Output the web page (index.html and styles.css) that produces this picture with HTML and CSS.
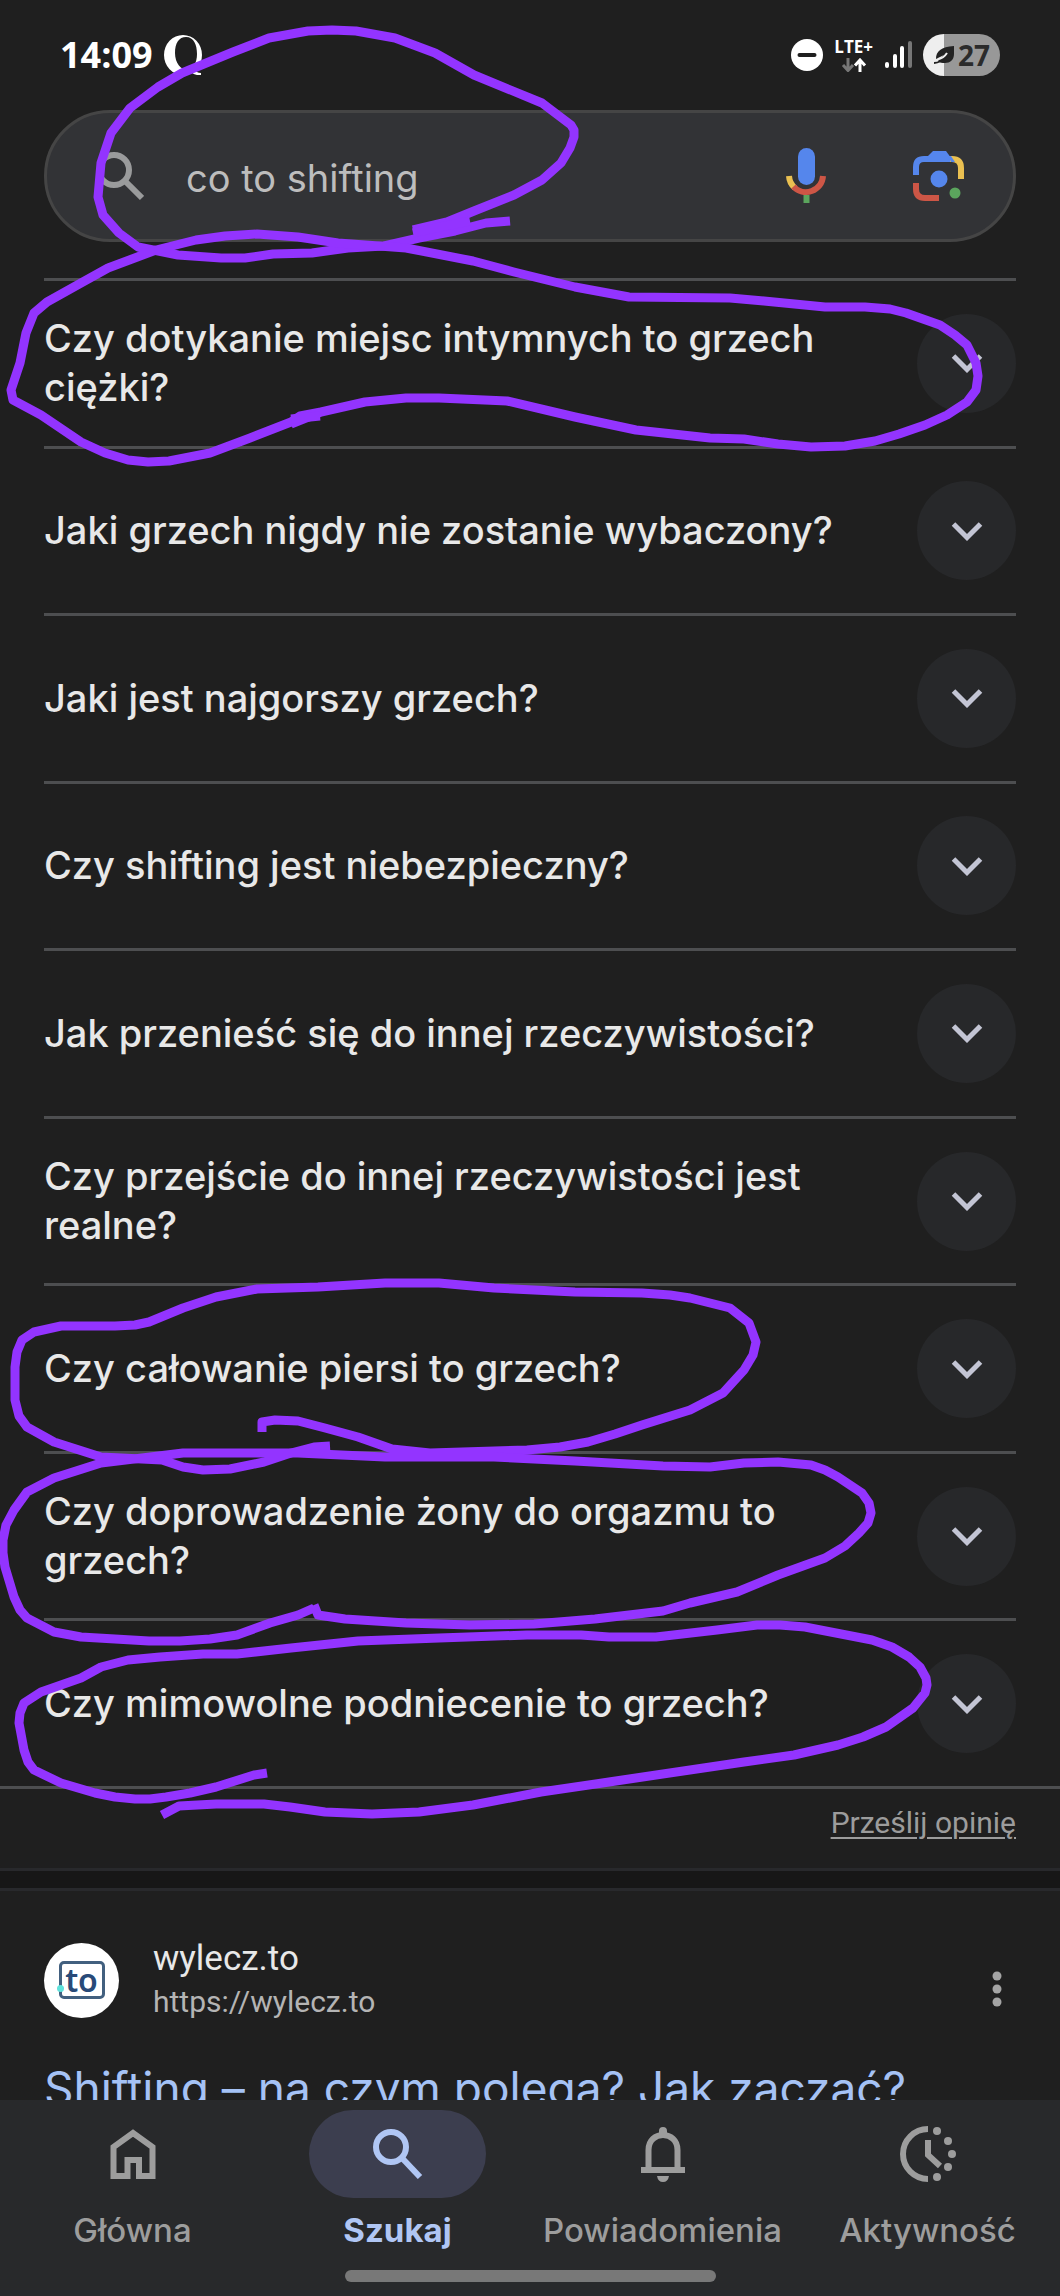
FILE: index.html
```html
<!DOCTYPE html>
<html lang="pl">
<head>
<meta charset="utf-8">
<meta name="viewport" content="width=device-width, initial-scale=1">
<title>co to shifting</title>
<link rel="stylesheet" href="styles.css">
</head>
<body>
<div class="screen">
  <svg class="symbols" aria-hidden="true">
    <symbol id="chevron" viewBox="0 0 32 20"><path d="M2.500 3 16 16.500 29.500 3" fill="none" stroke="currentColor" stroke-width="5"/></symbol>
  </svg>

  <header class="top">
    <div class="status">
      <div class="status-side">
        <span class="clock">14:09</span>
        <svg width="38" height="40" viewBox="0 0 38 40" fill="#fff" fill-rule="evenodd"><path d="M19 0a19 20 0 1 0 0 40 19 20 0 0 0 0-40ZM22 2c8 0 11 8 11 17s-4 16-10 16S11 28 11 18 15 2 22 2Z"/><path d="M23 31c5 0 8 7 14 7v2c-7 1-11-3-14-9Z"/></svg>
      </div>
      <div class="status-side">
        <svg width="32" height="32" viewBox="0 0 32 32"><circle cx="16" cy="16" r="16" fill="#fff"/><path d="M8.500 16h15" stroke="#1f1f1f" stroke-width="4" stroke-linecap="round"/></svg>
        <div class="network">
          <span>LTE+</span>
          <svg width="26" height="14" viewBox="0 0 26 14" fill="none" stroke-width="3"><path d="M7 0v12M2 7l5 5.500L12 7" stroke="#777"/><path d="M19 14V2M14 7.500 19 2l5 5.500" stroke="#fff"/></svg>
        </div>
        <svg width="28" height="30" viewBox="0 0 28 30" stroke-width="4" stroke-linecap="round"><path d="M3 24v2M11 16v10M18 8v18" stroke="#fff"/><path d="M26 3v23" stroke="#777"/></svg>
        <div class="battery">
          <svg width="22" height="20" viewBox="0 0 22 20"><path d="M21 1v8c0 6-4 9-9 9-3 0-5 0-7-2l6-6-8 4C3 6 8 2 21 1Z" fill="#222"/><path d="M1 18c4 0 9-3 13-8" fill="none" stroke="#222" stroke-width="2"/><path d="M5 14c4 0 7-3 9-6" fill="none" stroke="#eee" stroke-width="2"/></svg>
          <span>27</span>
        </div>
      </div>
    </div>
    <form class="search" role="search">
      <svg width="46" height="50" viewBox="0 0 46 50" fill="none" stroke="#9a9b9c" stroke-width="6"><circle cx="16" cy="19" r="15"/><path d="m27 30 17 17"/></svg>
      <input class="search-input" type="text" value="co to shifting" aria-label="Szukaj">
      <button class="search-button" type="button" aria-label="Wyszukiwanie głosowe">
        <svg width="40" height="56" viewBox="0 0 40 56" fill="none"><rect x="12" y="0" width="17" height="37" rx="8.500" fill="#5586ec"/><path d="M3 28a17 17 0 0 0 6 12" stroke="#eac051" stroke-width="6"/><path d="M7.500 38.500A17 17 0 0 0 37 28" stroke="#cd5646" stroke-width="6"/><path d="M20.500 47v8" stroke="#5ba55d" stroke-width="6"/></svg>
      </button>
      <button class="search-button" type="button" aria-label="Obiektyw">
        <svg width="52" height="52" viewBox="0 0 52 52" fill="none" stroke-width="6"><path d="M3 25V17q0-8 8-8h28" stroke="#5586ec"/><path d="M14 7 20 1h13l8 11H15Z" fill="#5586ec"/><path d="M37 9h2q9 0 9 9v11" stroke="#eac051"/><path d="M35 6h3l4 6h-4Z" fill="#5586ec"/><path d="M3 33v6q0 9 9 9h14" stroke="#cd5646"/><circle cx="26" cy="29" r="8.500" fill="#5586ec"/><circle cx="42" cy="43" r="5.500" fill="#5ba55d"/></svg>
      </button>
    </form>
  </header>

  <main class="results">
    <section class="questions">
      <div class="question"><h2>Czy dotykanie miejsc intymnych to grzech ciężki?</h2><button class="expand" type="button" aria-label="Rozwiń"><svg width="32" height="20"><use href="#chevron"/></svg></button></div>
      <div class="question"><h2>Jaki grzech nigdy nie zostanie wybaczony?</h2><button class="expand" type="button" aria-label="Rozwiń"><svg width="32" height="20"><use href="#chevron"/></svg></button></div>
      <div class="question"><h2>Jaki jest najgorszy grzech?</h2><button class="expand" type="button" aria-label="Rozwiń"><svg width="32" height="20"><use href="#chevron"/></svg></button></div>
      <div class="question"><h2>Czy shifting jest niebezpieczny?</h2><button class="expand" type="button" aria-label="Rozwiń"><svg width="32" height="20"><use href="#chevron"/></svg></button></div>
      <div class="question"><h2>Jak przenieść się do innej rzeczywistości?</h2><button class="expand" type="button" aria-label="Rozwiń"><svg width="32" height="20"><use href="#chevron"/></svg></button></div>
      <div class="question"><h2>Czy przejście do innej rzeczywistości jest realne?</h2><button class="expand" type="button" aria-label="Rozwiń"><svg width="32" height="20"><use href="#chevron"/></svg></button></div>
      <div class="question"><h2>Czy całowanie piersi to grzech?</h2><button class="expand" type="button" aria-label="Rozwiń"><svg width="32" height="20"><use href="#chevron"/></svg></button></div>
      <div class="question"><h2>Czy doprowadzenie żony do orgazmu to grzech?</h2><button class="expand" type="button" aria-label="Rozwiń"><svg width="32" height="20"><use href="#chevron"/></svg></button></div>
      <div class="question"><h2>Czy mimowolne podniecenie to grzech?</h2><button class="expand" type="button" aria-label="Rozwiń"><svg width="32" height="20"><use href="#chevron"/></svg></button></div>
    </section>
    <div class="feedback"><a href="#">Prześlij opinię</a></div>
    <div class="divider"></div>
    <article class="result">
      <div class="source">
        <span class="favicon"><span class="favicon-mark">to</span></span>
        <div class="source-text">
          <span class="site">wylecz.to</span>
          <span class="url">https://wylecz.to</span>
        </div>
        <button class="more" type="button" aria-label="Więcej"><svg width="10" height="36" viewBox="0 0 10 36" fill="#a4a4a4"><circle cx="5" cy="5" r="4.500"/><circle cx="5" cy="18" r="4.500"/><circle cx="5" cy="31" r="4.500"/></svg></button>
      </div>
      <a class="title" href="#">Shifting – na czym polega? Jak zacząć?</a>
    </article>
  </main>

  <nav class="nav">
    <div class="tabs">
      <a class="tab" href="#"><span class="tab-icon"><svg width="46" height="50" viewBox="0 0 46 50" fill="none" stroke="currentColor" stroke-width="6"><path d="M3.500 47V18L23 4l19.500 14v29H29V31H17.500v16Z"/></svg></span>Główna</a>
      <a class="tab active" href="#"><span class="tab-icon"><svg width="50" height="50" viewBox="0 0 50 50" fill="none" stroke="currentColor" stroke-width="6"><circle cx="18" cy="18" r="15"/><path d="m29 29 18 19"/></svg></span>Szukaj</a>
      <a class="tab" href="#"><span class="tab-icon"><svg width="46" height="56" viewBox="0 0 46 56" fill="none" stroke="currentColor" stroke-width="6"><path d="M8.500 44V24C8.500 4 37.500 4 37.500 24v20M1 44h44"/><path d="M19 8V5q0-4 4-4t4 4v3ZM17 50h12q-1 6-6 6t-6-6Z" fill="currentColor" stroke="none"/></svg></span>Powiadomienia</a>
      <a class="tab" href="#"><span class="tab-icon"><svg width="58" height="58" viewBox="0 0 58 58" fill="none" stroke="currentColor" stroke-width="6"><path d="M29 4a25 25 0 0 0 0 50M29 15v15l12 11"/><g fill="currentColor" stroke="none"><circle cx="38" cy="6" r="4"/><circle cx="49" cy="16" r="4"/><circle cx="53" cy="29" r="4"/><circle cx="49" cy="42" r="4"/><circle cx="38" cy="52" r="4"/></g></svg></span>Aktywność</a>
    </div>
    <div class="home-bar"></div>
  </nav>

  <svg class="ink" viewBox="0 0 1060 2296" fill="none" stroke="#9334ff" stroke-width="9" stroke-linejoin="round" aria-hidden="true">
    <polyline points="413,230 447,222 474,211 514,195 542,180 561,163 570,148 574,137 574,130 571,125 542,103 474,75 435,53 395,38 356,31 332,30 308,31 269,38 233,52 182,73 158,87 130,108 111,133 101,163 98,197 103,215 119,233 138,247 178,255 221,258 245,258 273,254 312,253 348,248 384,246 419,238 455,231 486,223 510,221"/>
    <polyline points="413,233 440,227 470,221"/>
    <polyline points="291,424 321,412 365,402 406,398 439,398 507,401 575,417 636,430 710,438 744,439 778,444 811,447 845,446 875,441 899,434 925,425 947,415 967,402 976,390 978,376 976,363 967,345 955,335 940,325 906,313 890,309 865,307 825,307 764,301 730,298 629,297 575,287 514,272 473,261 406,248 379,246 338,243 298,237 257,234 225,236 196,240 156,250 108,268 81,283 47,302 34,313 26,333 20,363 11,390 13,400 41,415 81,442 105,453 128,460 148,462 169,461 210,453 250,438 291,422 300,416 321,412"/>
    <polyline points="291,419 320,416"/>
    <polyline points="262,1432 262,1422 275,1420 298,1421 325,1428 358,1437 392,1449 430,1453 527,1450 560,1447 588,1442 615,1434 642,1425 690,1410 723,1393 744,1370 753,1355 756,1342 749,1323 730,1308 690,1298 670,1295 642,1293 575,1292 494,1288 439,1283 385,1283 318,1287 257,1289 216,1297 183,1308 149,1322 135,1325 115,1326 61,1326 34,1332 22,1340 17,1352 15,1367 15,1400 19,1416 27,1427 54,1442 101,1457 162,1460 183,1467 203,1470 230,1469 264,1462 291,1453 314,1447 330,1446"/>
    <polyline points="314,1605 318,1615 345,1619 406,1623 470,1625 534,1624 595,1619 663,1611 690,1603 737,1592 778,1575 825,1558 845,1546 859,1533 868,1523 871,1513 869,1503 862,1493 838,1477 825,1470 811,1465 778,1462 744,1463 710,1467 663,1466 575,1461 494,1457 385,1457 298,1453 183,1453 142,1458 101,1463 54,1478 27,1492 14,1510 6,1525 3,1540 3,1553 5,1567 14,1597 20,1610 27,1618 54,1632 81,1637 149,1641 180,1641 210,1639 237,1635 270,1623 298,1615 314,1608"/>
    <polyline points="267,1773 254,1775 216,1787 190,1793 166,1797 150,1799 135,1799 115,1797 95,1793 61,1783 34,1770 28,1762 24,1750 19,1723 20,1713 24,1703 41,1692 81,1678 101,1667 128,1660 160,1657 203,1654 237,1654 291,1648 358,1641 439,1638 527,1635 581,1635 609,1637 656,1637 717,1630 757,1625 780,1625 805,1627 872,1640 892,1647 909,1657 920,1667 926,1678 927,1685 925,1693 913,1708 886,1727 863,1737 838,1745 794,1755 744,1762 609,1782 541,1792 473,1805 419,1812 372,1814 325,1812 290,1807 264,1804 216,1804 179,1806 162,1815"/>
  </svg>
</div>
</body>
</html>
```

FILE: styles.css
```css
* { box-sizing: border-box; }
body { margin: 0; background: #1f1f1f; color: #e8e8e8; font-family: Roboto, "Liberation Sans", sans-serif; }
button { border: 0; padding: 0; background: none; color: inherit; }
svg { display: block; flex: none; }
.symbols { position: absolute; width: 0; height: 0; }
.screen { position: relative; display: flex; flex-direction: column; height: 100vh; overflow: hidden; }

.top { padding: 0 44px 24px; }
.status { display: flex; justify-content: space-between; align-items: center; height: 110px; padding: 0 16px; }
.status-side { display: flex; align-items: center; gap: 11px; }
.clock { font: 700 36px/40px "Open Sans", sans-serif; color: #fff; }
.network { display: flex; flex-direction: column; align-items: center; gap: 3px; font: 700 17px/16px "Open Sans", sans-serif; color: #fff; }
.battery { display: flex; align-items: center; justify-content: center; gap: 3px; width: 77px; height: 42px; border-radius: 21px; background: linear-gradient(90deg, #eee 27%, #989898 27%); font: 700 28px/32px "Open Sans", sans-serif; color: #2b2b2b; }

.search { display: flex; align-items: center; height: 132px; padding: 0 44px 0 51px; border: 3px solid #454545; border-radius: 66px; background: #323336; }
.search-input { flex: 1; min-width: 0; padding: 4px 0 0; margin-left: 42px; border: 0; background: none; color: #bdbdbd; font: 400 38px/48px Inter, sans-serif; }
.search-button { display: grid; place-items: center; width: 60px; height: 60px; margin-left: 73px; }

.results { flex: 1; min-height: 0; overflow: hidden; padding-top: 12px; }
.questions { display: grid; grid-auto-rows: 1fr; min-height: 1511px; border-bottom: 3px solid #4d4e50; }
.question { display: flex; align-items: center; gap: 70px; margin: 0 44px; border-top: 3px solid #4d4e50; }
.question h2 { flex: 1; margin: 0; font: 500 38px/49px Inter, sans-serif; }
.expand { display: grid; place-items: center; flex: none; width: 99px; height: 99px; border-radius: 50%; background: #27282a; color: #c3c5d4; }
.feedback { display: flex; justify-content: flex-end; padding: 16px 44px 27px; font-size: 30px; line-height: 36px; }
.feedback a { color: #9c9c9c; text-underline-offset: 4px; text-decoration-thickness: 2px; }
.divider { height: 23px; border: solid #28292c; border-width: 3px 0; background: #171717; }

.result { padding: 46px 44px 0; }
.source { display: flex; align-items: center; gap: 34px; padding-right: 14px; }
.favicon { display: grid; place-items: center; width: 75px; height: 75px; border-radius: 50%; background: #fff; }
.favicon-mark { position: relative; display: grid; place-items: center; width: 46px; height: 38px; border: 3px solid #42607f; border-radius: 5px; color: #284a78; font: 600 32px/30px "Noto Sans", sans-serif; }
.favicon-mark::after { content: ""; position: absolute; left: -5px; bottom: 4px; width: 7px; height: 7px; border-radius: 50%; background: #5fe3dc; }
.source-text { display: flex; flex-direction: column; flex: 1; }
.site { font-size: 35px; line-height: 44px; }
.url { font-size: 30px; line-height: 42px; color: #b4b4b4; }
.more { padding-top: 18px; }
.title { display: block; margin-top: 35px; color: #a5c2f5; font: 400 46px/60px Inter, sans-serif; text-decoration: none; white-space: nowrap; }

.nav { display: flex; flex-direction: column; align-items: center; background: #28292b; padding: 10px 0 14px; }
.tabs { display: grid; grid-template-columns: repeat(4, 1fr); width: 100%; }
.tab { display: flex; flex-direction: column; align-items: center; gap: 12px; color: #9d9d9d; font: 500 33px/40px Inter, sans-serif; text-decoration: none; }
.tab-icon { display: grid; place-items: center; width: 177px; height: 88px; border-radius: 44px; }
.active { color: #b0c6f4; font-weight: 700; }
.active .tab-icon { background: #3c3e4f; }
.home-bar { width: 35%; height: 12px; margin-top: 20px; border-radius: 6px; background: #787878; }

.ink { position: absolute; top: 0; left: 0; width: 100%; height: auto; pointer-events: none; }
```
